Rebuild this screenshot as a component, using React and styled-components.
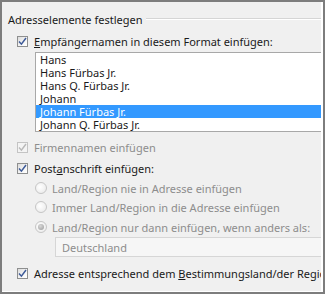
import React from "react";
import styled, { createGlobalStyle } from "styled-components";

const Global = createGlobalStyle`
  html, body { margin: 0; padding: 0; background: #f0f0f0; }
  body { font-family: "Noto Sans", "Liberation Sans", sans-serif; }
`;

const Frame = styled.div`
  width: 325px;
  height: 294px;
  box-sizing: border-box;
  border: 2px solid #7d7d7d;
  overflow: hidden;
`;

const Panel = styled.div`
  height: 100%;
  box-sizing: border-box;
  background: #f0f0f0;
  border-right: 2px solid #ffffff;
  border-bottom: 1px solid #ffffff;
  padding: 9px 0 0 6px;
  display: flex;
  flex-direction: column;
  overflow: hidden;
  font-size: 11px;
  color: #1a1a1a;
`;

const Heading = styled.div`
  display: flex;
  align-items: center;
  height: 16px;
  gap: 4px;
  white-space: nowrap;
  &::after {
    content: "";
    flex: 1;
    height: 1px;
    margin-top: -1px;
    background: #d5d5d5;
    box-shadow: 0 1px 0 #ffffff;
  }
`;

const Row = styled.label`
  display: flex;
  align-items: center;
  height: 16px;
  margin-top: ${(p) => p.$mt || 0}px;
  padding-left: ${(p) => p.$indent || 0}px;
  white-space: nowrap;
  color: ${(p) => (p.$disabled ? "#8d8d8d" : "#1a1a1a")};
`;

const Box = styled.span`
  width: 11px;
  height: 11px;
  box-sizing: border-box;
  border: 1px solid ${(p) => (p.$disabled ? "#c4c4c4" : "#8e8f8f")};
  background: ${(p) =>
    p.$disabled
      ? "#f4f4f4"
      : "linear-gradient(135deg, #dcdcdc 0%, #f6f6f6 60%, #ffffff 100%)"};
  margin-right: 6px;
  display: flex;
  align-items: center;
  justify-content: center;
  flex-shrink: 0;
`;

const Radio = styled.span`
  width: 12px;
  height: 12px;
  box-sizing: border-box;
  border-radius: 50%;
  border: 1px solid #c6c6c6;
  background: radial-gradient(circle at 40% 40%, #ffffff 0%, #eeeeee 70%, #e2e2e2 100%);
  margin-right: 5px;
  display: flex;
  align-items: center;
  justify-content: center;
  flex-shrink: 0;
  &::after {
    content: "";
    display: ${(p) => (p.$checked ? "block" : "none")};
    width: 6px;
    height: 6px;
    border-radius: 50%;
    background: radial-gradient(circle at 40% 35%, #d8d8d8, #9a9a9a);
  }
`;

const List = styled.div`
  margin: 3px 0 0 27px;
  width: 320px;
  border: 1px solid #a8a8a8;
  background: #ffffff;
  flex-shrink: 0;
`;

const Item = styled.div`
  height: 13px;
  line-height: 13px;
  padding-left: 4px;
  white-space: nowrap;
  font-size: 11px;
  color: ${(p) => (p.$selected ? "#ffffff" : "#1a1a1a")};
  background: ${(p) => (p.$selected ? "#3399ff" : "transparent")};
`;

const Field = styled.div`
  margin: 2px 0 0 47px;
  width: 320px;
  height: 20px;
  box-sizing: border-box;
  border: 1px solid #d6d6d6;
  background: #f6f6f6;
  color: #8d8d8d;
  padding-left: 6px;
  display: flex;
  align-items: center;
  flex-shrink: 0;
`;

function Check({ disabled }) {
  return (
    <Box $disabled={disabled}>
      <svg width="9" height="9" viewBox="0 0 9 9">
        <path
          d="M1 4.6 L3.4 7.2 L8 1"
          fill="none"
          stroke={disabled ? "#b9b9b9" : "#3d5a98"}
          strokeWidth="1.5"
        />
      </svg>
    </Box>
  );
}

const names = [
  "Hans",
  "Hans Fürbas Jr.",
  "Hans Q. Fürbas Jr.",
  "Johann",
  "Johann Fürbas Jr.",
  "Johann Q. Fürbas Jr.",
];

export default function App() {
  return (
    <>
      <Global />
      <Frame>
        <Panel>
          <Heading>Adresselemente festlegen</Heading>
          <Row $mt={6} $indent={9}>
            <Check />
            <span><u>E</u>mpfängernamen in diesem Format einfügen:</span>
          </Row>
          <List>
            {names.map((n) => (
              <Item key={n} $selected={n === "Johann Fürbas Jr."}>{n}</Item>
            ))}
          </List>
          <Row $mt={7} $indent={9} $disabled>
            <Check disabled />
            <span>Firmennamen einfügen</span>
          </Row>
          <Row $mt={5} $indent={9}>
            <Check />
            <span>Post<u>a</u>nschrift einfügen:</span>
          </Row>
          <Row $mt={4} $indent={27} $disabled>
            <Radio />
            <span>Land/Region nie in Adresse einfügen</span>
          </Row>
          <Row $mt={3} $indent={27} $disabled>
            <Radio />
            <span>Immer Land/Region in die Adresse einfügen</span>
          </Row>
          <Row $mt={4} $indent={27} $disabled>
            <Radio $checked />
            <span>Land/Region nur dann einfügen, wenn anders als:</span>
          </Row>
          <Field>Deutschland</Field>
          <Row $mt={8} $indent={9}>
            <Check />
            <span>Adresse entsprechend dem <u>B</u>estimmungsland/der Region</span>
          </Row>
        </Panel>
      </Frame>
    </>
  );
}
